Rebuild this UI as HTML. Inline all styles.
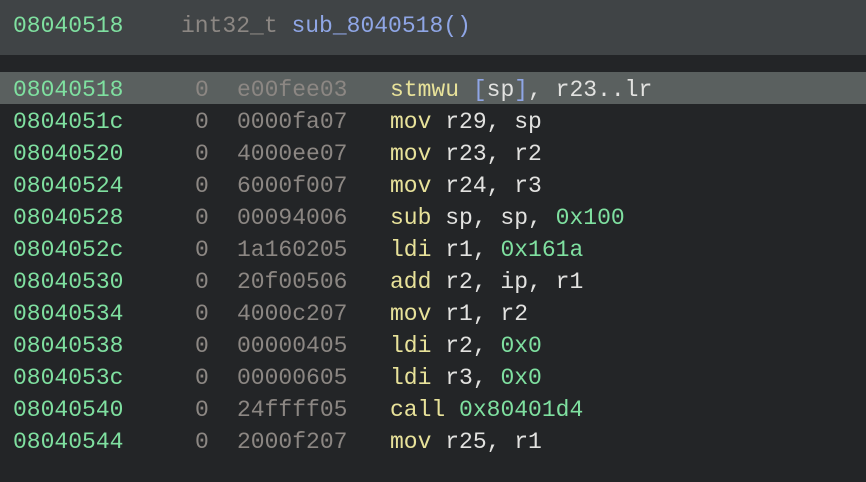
<!DOCTYPE html>
<html><head><meta charset="utf-8"><style>
html,body{margin:0;padding:0;width:866px;height:482px;overflow:hidden;background:#232527;}
body{font-family:"Liberation Mono","DejaVu Sans Mono",monospace;font-size:23px;color:#e2e2e0;}
.hdr{position:absolute;left:0;top:0;width:866px;height:55px;background:#404446;}
.row{position:absolute;left:0;width:866px;height:32px;line-height:32px;white-space:pre;}
.hl{background:#5a605f;}
span{position:absolute;top:2px;}
.a{left:13px;color:#7fe0a0;}
.z{left:195px;color:#8c8783;}
.b{left:237px;color:#8c8783;}
.m{left:390px;}
.y{color:#e8e29a;}
.g{color:#7fe0a0;}
.bl{color:#8fa6e6;}
.t{color:#8c8783;}
i,b{font-style:normal;font-weight:normal;}
</style></head><body>
<div class="hdr"><div class="row" style="top:8px"><span class="a">08040518</span><span style="left:181px"><i class="t">int32_t</i> <i class="bl">sub_8040518()</i></span></div></div>
<div class="row hl" style="top:72px"><span class="a">08040518</span><span class="z">0</span><span class="b">e00fee03</span><span class="m"><i class="y">stmwu</i> <i class="bl">[</i>sp<i class="bl">]</i>, r23..lr</span></div>
<div class="row" style="top:104px"><span class="a">0804051c</span><span class="z">0</span><span class="b">0000fa07</span><span class="m"><b class="y">mov</b> r29, sp</span></div>
<div class="row" style="top:136px"><span class="a">08040520</span><span class="z">0</span><span class="b">4000ee07</span><span class="m"><b class="y">mov</b> r23, r2</span></div>
<div class="row" style="top:168px"><span class="a">08040524</span><span class="z">0</span><span class="b">6000f007</span><span class="m"><b class="y">mov</b> r24, r3</span></div>
<div class="row" style="top:200px"><span class="a">08040528</span><span class="z">0</span><span class="b">00094006</span><span class="m"><b class="y">sub</b> sp, sp, <b class="g">0x100</b></span></div>
<div class="row" style="top:232px"><span class="a">0804052c</span><span class="z">0</span><span class="b">1a160205</span><span class="m"><b class="y">ldi</b> r1, <b class="g">0x161a</b></span></div>
<div class="row" style="top:264px"><span class="a">08040530</span><span class="z">0</span><span class="b">20f00506</span><span class="m"><b class="y">add</b> r2, ip, r1</span></div>
<div class="row" style="top:296px"><span class="a">08040534</span><span class="z">0</span><span class="b">4000c207</span><span class="m"><b class="y">mov</b> r1, r2</span></div>
<div class="row" style="top:328px"><span class="a">08040538</span><span class="z">0</span><span class="b">00000405</span><span class="m"><b class="y">ldi</b> r2, <b class="g">0x0</b></span></div>
<div class="row" style="top:360px"><span class="a">0804053c</span><span class="z">0</span><span class="b">00000605</span><span class="m"><b class="y">ldi</b> r3, <b class="g">0x0</b></span></div>
<div class="row" style="top:392px"><span class="a">08040540</span><span class="z">0</span><span class="b">24ffff05</span><span class="m"><b class="y">call</b> <b class="g">0x80401d4</b></span></div>
<div class="row" style="top:424px"><span class="a">08040544</span><span class="z">0</span><span class="b">2000f207</span><span class="m"><b class="y">mov</b> r25, r1</span></div>
</body></html>
